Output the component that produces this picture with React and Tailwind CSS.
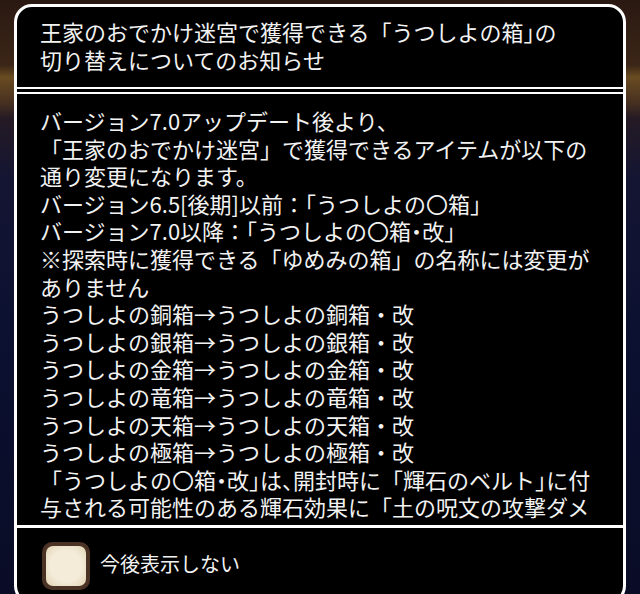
const H = "[font-feature-settings:'halt']";

// each line is a list of pieces; a piece in an array is set with half-width punctuation
const bodyLines = [
  ["バージョン7.0アップデート後より、"],
  ["「王家のおでかけ迷宮」で獲得できるアイテムが以下の"],
  ["通り変更になります。"],
  ["バージョン6.5[後期]以前：「うつしよの〇箱」"],
  ["バージョン7.0以降：「うつしよの〇箱", ["・"], "改」"],
  ["※探索時に獲得できる「ゆめみの箱」の名称には変更が"],
  ["ありません"],
  ["うつしよの銅箱→うつしよの銅箱・改"],
  ["うつしよの銀箱→うつしよの銀箱・改"],
  ["うつしよの金箱→うつしよの金箱・改"],
  ["うつしよの竜箱→うつしよの竜箱・改"],
  ["うつしよの天箱→うつしよの天箱・改"],
  ["うつしよの極箱→うつしよの極箱・改"],
  ["「うつしよの〇箱", ["・"], "改", ["」"], "は", ["、"], "開封時に「輝石のベルト", ["」"], "に付"],
  ["与される可能性のある輝石効果に「土の呪文の攻撃ダメ"],
];

export default function App() {
  return (
    <div
      className="w-[640px] h-[594px] overflow-hidden bg-[linear-gradient(180deg,#2a1912_0%,#3b2617_11%,#6a4c22_13%,#4a3220_17%,#241a24_20%,#141533_30%,#0b1030_60%,#0a0c26_100%)] pt-[4px] pl-[14px] pr-[14px]"
      style={{ fontFamily: '"Noto Sans CJK JP", "Noto Sans", sans-serif' }}
    >
      <div className="h-[600px] rounded-[18px] border-[3px] border-white bg-black flex flex-col overflow-hidden">
        {/* TITLE */}
        <div className="h-[82px] shrink-0 border-b-[2px] border-white pl-[23px] pt-[10px] text-[22px] leading-[28px] text-[#f2f2f2] whitespace-nowrap">
          <div>
            王家のおでかけ迷宮で獲得できる「うつしよの箱<span className={H}>」</span>の
          </div>
          <div>切り替えについてのお知らせ</div>
        </div>

        {/* BODY */}
        <div className="mt-[3px] h-[436px] shrink-0 border-t-[2px] border-b-[3px] border-white pl-[23px] pt-[13px] overflow-hidden text-[22px] leading-[27.6px] text-[#f2f2f2] whitespace-nowrap">
          {bodyLines.map((pieces, i) => (
            <div key={i}>
              {pieces.map((p, j) =>
                Array.isArray(p) ? (
                  <span key={j} className={H}>
                    {p[0]}
                  </span>
                ) : (
                  <span key={j}>{p}</span>
                )
              )}
            </div>
          ))}
        </div>

        {/* FOOTER */}
        <div className="flex items-center gap-[10px] pl-[25px] pt-[14px]">
          <div className="h-[48px] w-[48px] rounded-[10px] bg-[#4a3224] p-[4px] shadow-[0_0_2px_#000]">
            <div className="h-full w-full rounded-[7px] bg-[radial-gradient(circle,#f4ecd9_55%,#e2d3b3_100%)]" />
          </div>
          <span className="text-[20px] leading-[28px] text-[#f2f2f2] -mt-[4px]">今後表示しない</span>
        </div>
      </div>
    </div>
  );
}
